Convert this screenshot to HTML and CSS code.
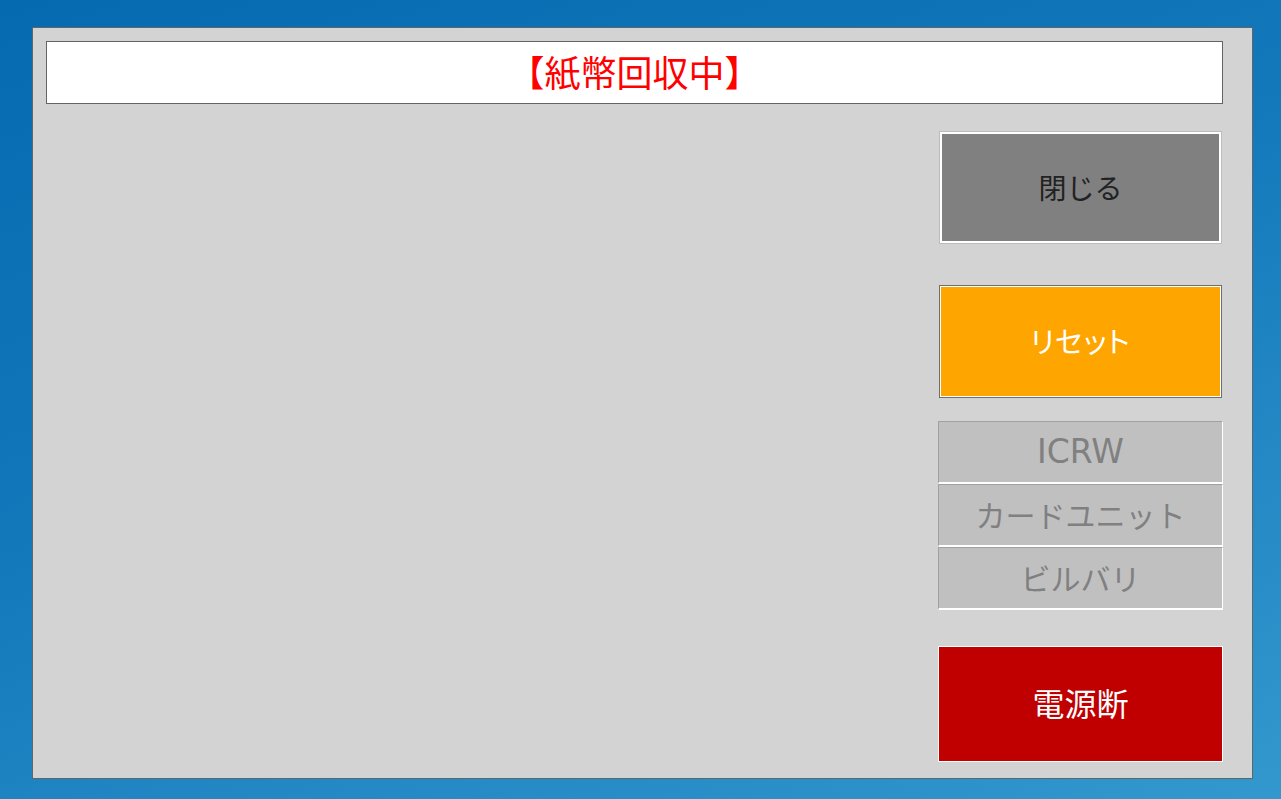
FILE: index.html
```html
<!DOCTYPE html>
<html lang="ja">
<head>
<meta charset="utf-8">
<title>紙幣回収中</title>
<link rel="stylesheet" href="styles.css">
</head>
<body>
<div class="panel">
  <div class="title">【紙幣回収中】</div>
  <div class="content">
    <div class="main"></div>
    <div class="side">
      <button class="btn close">閉じる</button>
      <button class="btn reset">リセット</button>
      <div class="group">
        <div class="unit latin">ICRW</div>
        <div class="unit">カードユニット</div>
        <div class="unit">ビルバリ</div>
      </div>
      <button class="btn power">電源断</button>
    </div>
  </div>
</div>
</body>
</html>
```
FILE: styles.css
```css
html, body {
  margin: 0;
  padding: 0;
  height: 100%;
}
body {
  background: linear-gradient(160deg, #056ab0 0%, #1479bb 45%, #3398cd 100%);
  font-family: "Noto Sans CJK JP", "Noto Sans", sans-serif;
  padding: 27px 0 0 32px;
  box-sizing: border-box;
  overflow: hidden;
}
.panel {
  width: 1221px;
  height: 752px;
  box-sizing: border-box;
  border: 1px solid #646464;
  background: #d3d3d3;
  padding: 13px 29px 0 13px;
  display: flex;
  flex-direction: column;
}
.title {
  height: 63px;
  box-sizing: border-box;
  border: 1px solid #646464;
  background: #ffffff;
  color: #ff0000;
  font-size: 36px;
  display: flex;
  align-items: center;
  justify-content: center;
  line-height: 1;
  padding-bottom: 4px;
}
.content {
  display: flex;
  flex: 1;
}
.main {
  flex: 1;
}
.side {
  width: 285px;
  display: flex;
  flex-direction: column;
  padding-top: 27px;
}
.btn {
  font-family: inherit;
  display: flex;
  align-items: center;
  justify-content: center;
  box-sizing: border-box;
  padding: 0;
  margin: 0;
  line-height: 1;
  cursor: pointer;
}
.close {
  margin-left: 1px;
  width: 283px;
  height: 113px;
  background: #808080;
  border: 1px solid #bcbcbc;
  box-shadow: inset 0 0 0 2px #ffffff;
  color: #222222;
  font-size: 28px;
  padding-bottom: 2px;
}
.reset {
  margin-left: 1px;
  margin-top: 41px;
  width: 283px;
  height: 113px;
  background: #ffa500;
  border: 1px solid #6e6e6e;
  box-shadow: inset 0 0 0 1px #ffffff;
  color: #ffffff;
  font-size: 29px;
  font-feature-settings: "palt";
  letter-spacing: 1px;
  padding-bottom: 3px;
}
.group {
  margin-top: 23px;
  display: flex;
  flex-direction: column;
}
.unit {
  height: 63px;
  box-sizing: border-box;
  background: #c0c0c0;
  border-top: 1px solid #a0a0a0;
  border-left: 1px solid #a0a0a0;
  border-right: 1px solid #ffffff;
  border-bottom: 2px solid #ffffff;
  color: #808080;
  font-size: 30px;
  display: flex;
  align-items: center;
  justify-content: center;
  line-height: 1;
  padding-bottom: 3px;
}
.latin {
  font-family: "DejaVu Sans", sans-serif;
  font-size: 33px;
  padding-bottom: 1px;
}
.power {
  margin-top: 36px;
  width: 285px;
  height: 116px;
  background: #c00000;
  border: 1px solid #ffffff;
  color: #ffffff;
  font-size: 32px;
  padding-bottom: 5px;
}
```
